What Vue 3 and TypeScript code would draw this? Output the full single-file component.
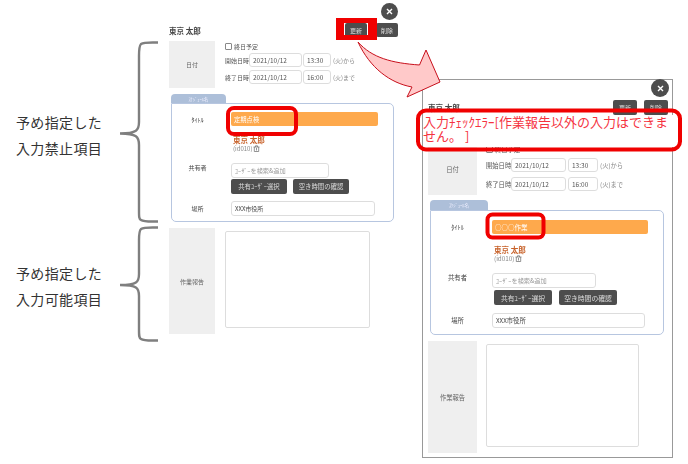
<script setup lang="ts">
interface FormData {
  key: string
  title: string
}
const forms: FormData[] = [
  { key: 'left', title: '定期点検' },
  { key: 'right', title: '○○○作業' },
]
const notes = [
  { key: 'n1', lines: ['予め指定した', '入力禁止項目'] },
  { key: 'n2', lines: ['予め指定した', '入力可能項目'] },
]
</script>

<template>
  <div class="canvas">
    <div v-for="n in notes" :key="n.key" class="note" :class="n.key">
      <p v-for="l in n.lines" :key="l">{{ l }}</p>
    </div>

    <svg class="overlay-svg under" width="688" height="464" viewBox="0 0 688 464" aria-hidden="true">
      <path class="brace" d="M158 42.500 C150 42.500 144 42 141 44 C139 46 139 50 139 56 L139 122 C139 130 137 133.500 120 133.500 C137 133.500 139 137 139 145 L139 210 C139 217 139 219 141 220 C144 222 150 221.500 158 221.500" />
      <path class="brace" d="M158 227.500 C150 227.500 144 227 141 229 C139 231 139 234 139 240 L139 274 C139 282 137 285 120 285 C137 285 139 288 139 296 L139 330 C139 336 139 338 141 339 C144 341 150 340.500 158 340.500" />
    </svg>

    <section v-for="f in forms" :key="f.key" class="form" :class="f.key">
      <button class="close" type="button" aria-label="閉じる">
        <svg width="7" height="7" viewBox="0 0 7 7"><path d="M1 1 6 6M6 1 1 6" stroke="#fff" stroke-width="1.4" /></svg>
      </button>

      <header class="head">
        <strong class="name">東京 太郎</strong>
        <div class="head-btns">
          <span class="btn">更新</span>
          <span class="btn">削除</span>
        </div>
      </header>

      <div class="section date-section">
        <div class="side">日付</div>
        <div class="date-body">
          <label class="allday"><i class="check"></i>終日予定</label>
          <div class="date-row">
            <span class="cap">開始日時</span>
            <span class="input date">2021/10/12</span>
            <span class="input time">13:30</span>
            <span class="suffix">(火)から</span>
          </div>
          <div class="date-row">
            <span class="cap">終了日時</span>
            <span class="input date">2021/10/12</span>
            <span class="input time">16:00</span>
            <span class="suffix">(火)まで</span>
          </div>
        </div>
      </div>

      <div class="tab">ｽｹｼﾞｭｰﾙ名</div>
      <div class="panel">
        <div class="row title-row">
          <span class="row-label">ﾀｲﾄﾙ</span>
          <div class="orange">{{ f.title }}</div>
        </div>
        <div class="row user-row">
          <span></span>
          <div class="user">
            <b>東京 太郎</b>
            <span class="uid">(id010)
              <svg width="7" height="7" viewBox="0 0 7 7"><path d="M.5 2h6M2.500 2V.8h2V2M1.300 2v4.500h4.400V2M3.500 3v2.500" fill="none" stroke="#777" stroke-width=".8" /></svg>
            </span>
          </div>
        </div>
        <div class="row share-row">
          <span class="row-label share-label">共有者</span>
          <div>
            <span class="input user-input placeholder">ﾕｰｻﾞｰを検索&amp;追加</span>
            <div class="share-btns">
              <span class="btn wide">共有ﾕｰｻﾞｰ選択</span>
              <span class="btn wide">空き時間の確認</span>
            </div>
          </div>
        </div>
        <div class="row place-row">
          <span class="row-label">場所</span>
          <span class="input place">XXX市役所</span>
        </div>
      </div>

      <div class="section report">
        <div class="side">作業報告</div>
        <div class="textarea"></div>
      </div>
    </section>

    <div class="error">入力ﾁｪｯｸｴﾗｰ[作業報告以外の入力はできません。 ]</div>

    <svg class="overlay-svg" width="688" height="464" viewBox="0 0 688 464" aria-hidden="true">
      <path class="arrow" d="M358 42 C372 58 392 63 419.500 65 L426 50 L440 82 L407 97 L412 87 C390 83 370 68 358 42 Z" />
      <path class="mark-fill" fill-rule="evenodd" d="M336 18H377V40H336ZM344 23V35H368V23Z" />
      <rect class="mark" x="228" y="108" width="68" height="26" rx="6" />
      <rect class="mark" x="487.500" y="214.500" width="56" height="23" rx="5" />
      <rect class="mark" x="418" y="110.500" width="262" height="39" rx="8" />
    </svg>
  </div>
</template>

<style scoped>
.canvas {
  position: relative;
  width: 688px;
  height: 464px;
  overflow: hidden;
  background: #fff;
  font-family: "Noto Sans CJK JP", "Noto Sans", sans-serif;
  color: #555;
}
.overlay-svg {
  position: absolute;
  left: 0;
  top: 0;
  pointer-events: none;
}
.brace {
  fill: none;
  stroke: #7f7f7f;
  stroke-width: 2.4;
}
.arrow {
  fill: #ffc9c9;
  stroke: #c8101c;
  stroke-width: 1;
}
.mark {
  fill: none;
  stroke: #f00000;
  stroke-width: 4;
}
.mark-fill {
  fill: #f00000;
}
.note {
  position: absolute;
  left: 16px;
  color: #333;
  font-size: 14px;
  letter-spacing: .35px;
}
.note p {
  margin: 0;
  height: 25.500px;
  line-height: 25.500px;
}
.note.n1 {
  top: 110px;
}
.note.n2 {
  top: 261px;
}

.form {
  position: absolute;
  box-sizing: border-box;
  filter: blur(.3px);
  font-size: var(--fs);
}
.form.left {
  left: 169px;
  top: 22px;
  width: 229px;
  padding-top: 1px;
  --fs: 6px;
  --label-w: 46px;
  --body-x: 10px;
  --head-h: 14px;
  --date-mt: 4px;
  --date-h: 47px;
  --date-gap: 3px;
  --field-h: 14px;
  --cap-w: 24px;
  --date-w: 53px;
  --time-w: 28px;
  --time-ml: 1px;
  --btn-w: 22px;
  --head-gap: 9px;
  --panel-l: 2px;
  --panel-w: 223px;
  --tab-mt: 6px;
  --tab-w: 55px;
  --tab-h: 9px;
  --col: 59px;
  --pad-t: 8px;
  --orange-w: 147px;
  --orange-fs: 6.300px;
  --user-mt: 10px;
  --share-mt: 10px;
  --input-w: 98px;
  --wide-w: 56px;
  --wide-gap: 6px;
  --wide-fs: 6.400px;
  --wide-ml: 0px;
  --share-gap: 1px;
  --place-mt: 7px;
  --place-w: 144px;
  --panel-pb: 5px;
  --report-mt: 6px;
  --report-h: 106px;
  --ta-w: 145px;
  --ta-h: 97px;
  --ta-mt: 3px;
  --close-r: 0px;
  --close-t: -19px;
  --close-size: 17px;
}
.form.right {
  left: 422px;
  top: 79px;
  width: 251px;
  height: 379px;
  padding: 20px 4px 0 5px;
  border: 1px solid #999;
  --fs: 6.300px;
  --label-w: 49px;
  --body-x: 9px;
  --head-h: 15px;
  --date-mt: 29px;
  --date-h: 51px;
  --date-gap: 5px;
  --field-h: 14px;
  --cap-w: 25px;
  --date-w: 55px;
  --time-w: 30px;
  --time-ml: 2px;
  --btn-w: 24px;
  --head-gap: 7px;
  --panel-l: 2px;
  --panel-w: 234px;
  --tab-mt: 5px;
  --tab-w: 58px;
  --tab-h: 10px;
  --col: 61px;
  --pad-t: 9px;
  --orange-w: 156px;
  --orange-fs: 6.500px;
  --user-mt: 12px;
  --share-mt: 10px;
  --input-w: 104px;
  --wide-w: 58px;
  --wide-gap: 7px;
  --wide-fs: 6.800px;
  --wide-ml: 2px;
  --share-gap: 2px;
  --place-mt: 8px;
  --place-w: 153px;
  --panel-pb: 6px;
  --report-mt: 6px;
  --report-h: 112px;
  --ta-w: 153px;
  --ta-h: 103px;
  --ta-mt: 3px;
  --close-r: 3px;
  --close-t: -1px;
  --close-size: 18px;
}
.close {
  position: absolute;
  right: var(--close-r);
  top: var(--close-t);
  width: var(--close-size);
  height: var(--close-size);
  padding: 0;
  border: 0;
  border-radius: 50%;
  background: #4d4d4d;
  display: flex;
  align-items: center;
  justify-content: center;
}
.head {
  display: flex;
  align-items: center;
  justify-content: space-between;
  height: var(--head-h);
}
.name {
  font-size: 7.500px;
  color: #444;
}
.head-btns {
  display: flex;
  gap: var(--head-gap);
}
.btn {
  display: flex;
  align-items: center;
  justify-content: center;
  width: var(--btn-w);
  height: var(--head-h);
  box-sizing: border-box;
  border-radius: 2px;
  background: #4d4d4d;
  color: #ddd;
  font-size: 6px;
  white-space: nowrap;
}
.section {
  display: flex;
  gap: var(--body-x);
}
.date-section {
  margin-top: var(--date-mt);
}
.side {
  flex: none;
  width: var(--label-w);
  height: var(--date-h);
  display: flex;
  align-items: center;
  justify-content: center;
  background: #efefef;
  color: #666;
}
.date-body {
  display: flex;
  flex-direction: column;
  gap: var(--date-gap);
  padding-top: 1px;
}
.allday {
  display: flex;
  align-items: center;
  gap: 2px;
  height: 8px;
}
.check {
  width: 5px;
  height: 5px;
  border: 1px solid #888;
  border-radius: 1px;
  background: #fff;
}
.date-row {
  display: flex;
  align-items: center;
  height: var(--field-h);
}
.cap {
  flex: none;
  width: var(--cap-w);
  white-space: nowrap;
}
.input {
  box-sizing: border-box;
  display: flex;
  align-items: center;
  height: var(--field-h);
  padding-left: 3px;
  border: 1px solid #ddd;
  border-radius: 3px;
  background: #fff;
  white-space: nowrap;
}
.date,
.time {
  font-size: 6.500px;
}
.date {
  width: var(--date-w);
}
.time {
  width: var(--time-w);
  margin-left: var(--time-ml);
}
.suffix {
  margin-left: 2px;
  color: #888;
  white-space: nowrap;
}
.tab {
  margin: var(--tab-mt) 0 0 var(--panel-l);
  width: var(--tab-w);
  height: var(--tab-h);
  border-radius: 4px 4px 0 0;
  background: #adbfd9;
  color: #eef;
  font-size: 4.500px;
  display: flex;
  align-items: center;
  justify-content: center;
}
.panel {
  box-sizing: border-box;
  margin-left: var(--panel-l);
  width: var(--panel-w);
  padding: var(--pad-t) 0 var(--panel-pb);
  border: 1px solid #b7c6e0;
  border-radius: 0 5px 5px 5px;
}
.row {
  display: grid;
  grid-template-columns: var(--col) 1fr;
}
.row-label {
  text-align: center;
  color: #444;
  align-self: center;
  padding-right: 8px;
}
.orange {
  box-sizing: border-box;
  width: var(--orange-w);
  height: 14px;
  padding-left: 3px;
  display: flex;
  align-items: center;
  border-radius: 2px;
  background: #fea94c;
  color: #fff;
  font-size: var(--orange-fs);
}
.user-row {
  margin-top: var(--user-mt);
}
.user {
  display: flex;
  flex-direction: column;
  padding-left: 2px;
  line-height: 8.500px;
}
.user b {
  color: #c8622a;
  font-size: 7.500px;
}
.uid {
  display: flex;
  align-items: center;
  gap: 1px;
  color: #888;
}
.share-row {
  margin-top: var(--share-mt);
}
.share-label {
  align-self: start;
}
.user-input {
  width: var(--input-w);
  height: 15px;
}
.placeholder {
  color: #999;
  font-size: 6.200px;
}
.share-btns {
  display: flex;
  gap: var(--wide-gap);
  margin: var(--share-gap) 0 0 var(--wide-ml);
}
.btn.wide {
  width: var(--wide-w);
  height: 15px;
  font-size: var(--wide-fs);
}
.place-row {
  margin-top: var(--place-mt);
}
.place {
  width: var(--place-w);
  height: 15px;
  color: #444;
}
.report {
  margin-top: var(--report-mt);
}
.report .side {
  height: var(--report-h);
}
.textarea {
  box-sizing: border-box;
  width: var(--ta-w);
  height: var(--ta-h);
  margin-top: var(--ta-mt);
  border: 1px solid #ddd;
  border-radius: 2px;
  background: #fff;
}
.error {
  position: absolute;
  left: 423px;
  top: 115px;
  width: 252px;
  height: 32px;
  background: #fff;
  color: #f5333f;
  font-size: 13px;
  line-height: 14px;
}
</style>
